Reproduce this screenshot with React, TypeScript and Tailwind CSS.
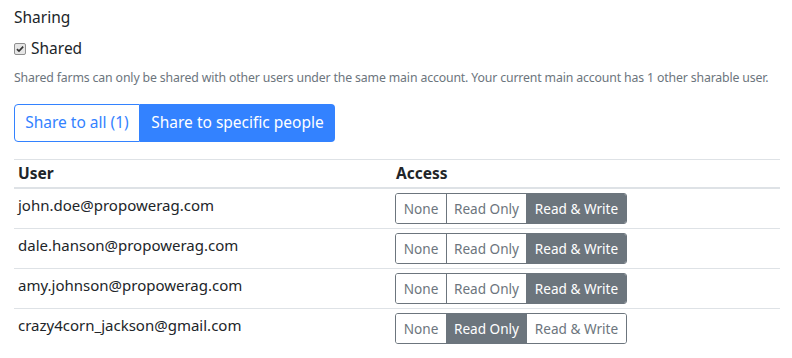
import React from 'react';

type Access = 'none' | 'read' | 'write';

const users: { email: string; access: Access }[] = [
  { email: 'john.doe@propowerag.com', access: 'write' },
  { email: 'dale.hanson@propowerag.com', access: 'write' },
  { email: 'amy.johnson@propowerag.com', access: 'write' },
  { email: 'crazy4corn_jackson@gmail.com', access: 'read' },
];

const options: { key: Access; label: string; w: string }[] = [
  { key: 'none', label: 'None', w: 'w-[50px]' },
  { key: 'read', label: 'Read Only', w: 'w-[80px]' },
  { key: 'write', label: 'Read & Write', w: 'w-[100px]' },
];

function AccessGroup({ value }: { value: Access }) {
  return (
    <div className="inline-flex h-[31px] rounded-[3px] border border-[#6c757d] overflow-hidden">
      {options.map((o, i) => (
        <div
          key={o.key}
          className={`${o.w} flex items-center justify-center text-[13.6px] ${
            i > 0 ? 'border-l border-[#6c757d]' : ''
          } ${value === o.key ? 'bg-[#6c757d] text-white' : 'bg-white text-[#6c757d]'}`}
        >
          {o.label}
        </div>
      ))}
    </div>
  );
}

export default function App() {
  return (
    <div
      className="w-[792px] h-[358px] bg-white pl-[14px] pr-[12px] pt-[5px] text-[#212529] overflow-hidden"
      style={{ fontFamily: '"Noto Sans", "Open Sans", sans-serif' }}
    >
      <div className="text-[15.5px] leading-6">Sharing</div>

      <label className="mt-2 flex items-center h-6 text-[15.5px]">
        <span className="w-[12px] h-[12px] rounded-[2px] border border-[#8f8f8f] bg-[#e6e6e6] flex items-center justify-center">
          <svg viewBox="0 0 12 12" className="w-[10px] h-[10px]">
            <path d="M2.3 6.2 L4.8 8.6 L9.8 3.2" fill="none" stroke="#333" strokeWidth="2" />
          </svg>
        </span>
        <span className="ml-[5px]">Shared</span>
      </label>

      <p className="mt-[7px] text-[12.3px] leading-[19px] text-[#6c757d] whitespace-nowrap tracking-[-0.15px]">
        Shared farms can only be shared with other users under the same main account. Your current main account has 1 other sharable user.
      </p>

      <div className="mt-[17px] inline-flex h-[38px] text-[15.5px]">
        <div className="w-[126px] flex items-center justify-center border border-[#3382ff] text-[#3382ff] rounded-l-[4px] bg-white">
          Share to all (1)
        </div>
        <div className="w-[195px] flex items-center justify-center bg-[#3382ff] text-white rounded-r-[4px]">
          Share to specific people
        </div>
      </div>

      <div className="mt-[17px] w-[766px] border-t border-[#dee2e6]">
        <div className="grid grid-cols-[378px_1fr] h-[29px] items-center border-b-2 border-[#dee2e6] font-bold text-[15.5px]">
          <div className="pl-1">User</div>
          <div className="pl-1">Access</div>
        </div>
        {users.map((u, i) => (
          <div
            key={u.email}
            className={`grid grid-cols-[378px_1fr] py-1 text-[15px] leading-6 ${
              i < users.length - 1 ? 'border-b border-[#dee2e6]' : ''
            }`}
          >
            <div className="pl-1">{u.email}</div>
            <div className="pl-[3px]">
              <AccessGroup value={u.access} />
            </div>
          </div>
        ))}
      </div>
    </div>
  );
}
